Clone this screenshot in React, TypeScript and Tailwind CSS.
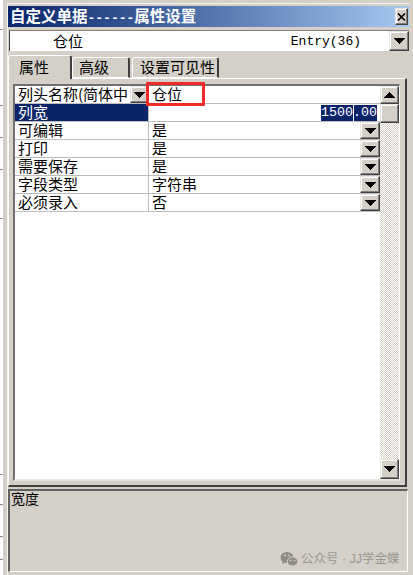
const FONT = "font-['Noto_Sans_CJK_SC','Liberation_Sans',sans-serif]"
const MONO = "font-['Liberation_Mono',monospace]"
const BTN = "bg-[#d4d0c8] border-t border-l border-t-[#e8e6e1] border-l-[#e8e6e1] border-r border-b border-r-[#404040] border-b-[#404040] shadow-[inset_-1px_-1px_0_#808080,inset_1px_1px_0_#ffffff] flex items-center justify-center"

const ROWS = [
  { name: "可编辑", value: "是" },
  { name: "打印", value: "是" },
  { name: "需要保存", value: "是" },
  { name: "字段类型", value: "字符串" },
  { name: "必须录入", value: "否" },
]

// bits of the desktop behind the window
const SLIVER = [30, 76, 32, 32, 49, 256, 30, 32, 23]

function Arrow({ up = false }: { up?: boolean }) {
  return (
    <svg width="11" height="6" viewBox="0 0 11 6" className={up ? "rotate-180" : ""}>
      <path d="M0 0h11v1h-1v1h-1v1h-1v1h-1v1h-1v1h-1v-1h-1v-1h-1v-1h-1v-1h-1v-1h-1z" fill="#000" />
    </svg>
  )
}

function DropButton({ className }: { className: string }) {
  return <div className={`${BTN} ${className}`}><Arrow /></div>
}

function Tab({ label, active, className }: { label: string; active?: boolean; className: string }) {
  return (
    <div className={`${className} flex items-center rounded-t-[3px] border-t border-l border-t-white border-l-white border-r-2 border-r-[#404040] text-[15px] text-black ${active ? "h-[24px] relative z-10 -mb-px bg-[#d4d0c8]" : "h-[21px] self-end border-b border-b-white"}`}>
      <span className="pb-[2px]">{label}</span>
    </div>
  )
}

export default function App() {
  return (
    <div className={`${FONT} relative w-[413px] h-[575px] flex bg-[#d4d0c8] overflow-hidden leading-none`}>
      <div className="w-[3px] shrink-0 flex flex-col bg-white">
        {SLIVER.map((h, i) => (
          <div key={i} className="border-b border-b-[#8a8a8a] shrink-0" style={{ height: h }} />
        ))}
      </div>

      <div className="ml-[4px] mt-[3px] w-[402px] h-[572px] shrink-0 flex flex-col border-t border-l border-t-[#f4f3f0] border-l-[#f4f3f0] pt-[2px]">
        {/* title bar */}
        <div className="h-[21px] w-[401px] flex items-center justify-between bg-gradient-to-r from-[#0a246a] to-[#a6caf0] pl-[2px] pr-px">
          <span className="text-[15.5px] font-bold text-white whitespace-nowrap">
            自定义单据<span className={`${MONO} text-[13px]`}>------</span>属性设置
          </span>
          <div className={`${BTN} w-[13px] h-[17px]`}>
            <svg width="9" height="8" viewBox="0 0 9 8">
              <path d="M1 0.5l7 7M8 0.5l-7 7" stroke="#000" strokeWidth="1.6" fill="none" />
            </svg>
          </div>
        </div>

        {/* field selector */}
        <div className="mt-[3px] ml-px h-[21px] w-[400px] flex border-t border-l border-t-[#808080] border-l-[#404040] bg-white">
          <div className="flex-1 flex items-center justify-between pl-[43px] pr-[28px] text-[15px] text-black">
            <span className="pb-[2px]">仓位</span>
            <span className={`${MONO} text-[13px]`}>Entry(36)</span>
          </div>
          <DropButton className="w-[20px] h-[20px]" />
        </div>

        {/* tabs */}
        <div className="mt-[4px] h-[23px] flex items-end">
          <Tab label="属性" active className="w-[64px] pl-[10px]" />
          <Tab label="高级" className="w-[58px] pl-[6px]" />
          <Tab label="设置可见性" className="ml-[2px] w-[87px] pl-[7px]" />
        </div>

        {/* tab panel */}
        <div className="w-[399px] h-[409px] flex flex-col border-t border-l border-t-white border-l-white border-r-2 border-b-2 border-r-[#404040] border-b-[#404040] pl-[4px] pt-[5px]">
          <div className="relative w-[387px] h-[397px] flex border-t-2 border-l-2 border-t-[#707070] border-l-[#707070] border-r border-b-2 border-r-white border-b-[#e8e6e1] bg-white">
            <div className="flex-1 flex flex-col text-[15px] text-black">
              <div className="h-[18px] flex border-b border-b-[#bdbdbd]">
                <div className="w-[133px] flex items-center justify-between">
                  <span className="pl-[3px] pb-[2px] whitespace-nowrap">列头名称(简体中</span>
                  <DropButton className="w-[18px] h-[17px] shrink-0" />
                </div>
                <div className="flex-1 flex items-center pl-[4px]"><span className="pb-[2px]">仓位</span></div>
              </div>
              <div className="h-[18px] flex border-b border-b-[#bdbdbd]">
                <div className="w-[133px] flex items-center bg-[#0a246a] pl-[3px] text-white"><span className="pb-[2px]">列宽</span></div>
                <div className="flex-1 flex items-center justify-end border-l border-l-[#bdbdbd] pr-[3px]">
                  <span className={`${MONO} relative bg-[#0a246a] h-[16px] w-[56px] flex items-center justify-center text-[13.3px] text-white`}>
                    1500.00
                    <span className="absolute left-[32px] top-0 h-[17px] w-px bg-white" />
                  </span>
                </div>
              </div>
              {ROWS.map((r) => (
                <div key={r.name} className="h-[18px] flex border-b border-b-[#bdbdbd]">
                  <div className="w-[133px] flex items-center pl-[3px]"><span className="pb-[2px]">{r.name}</span></div>
                  <div className="flex-1 flex items-center justify-between border-l border-l-[#bdbdbd] pl-[3px]">
                    <span className="pb-[2px]">{r.value}</span>
                    <DropButton className="w-[20px] h-[17px]" />
                  </div>
                </div>
              ))}
            </div>

            {/* scrollbar */}
            <div className="w-[19px] flex flex-col bg-[repeating-conic-gradient(#d4d0c8_0_25%,#ffffff_0_50%)] bg-size-[2px_2px]">
              <div className={`${BTN} w-[19px] h-[18px]`}><Arrow up /></div>
              <div className={`${BTN} w-[19px] h-[19px]`} />
              <div className="flex-1" />
              <div className={`${BTN} w-[19px] h-[20px]`}><Arrow /></div>
            </div>

            <div className="absolute left-[131px] top-[-4px] w-[59px] h-[24px] border-[3px] border-[#ee2a2a] rounded-[1px]" />
          </div>
        </div>

        {/* description */}
        <div className="mt-[2px] w-[400px] h-[83px] border-t-2 border-l-2 border-t-[#606060] border-l-[#606060] border-r border-b border-r-white border-b-white pl-px text-[14px] text-black">
          宽度
        </div>
      </div>

      {/* watermark */}
      <div className="absolute left-[280px] top-[551px] flex items-center gap-[3px] font-['Liberation_Sans','Noto_Sans_CJK_SC',sans-serif] text-[12.5px] text-[#9a9792] whitespace-nowrap">
        <svg width="18" height="16" viewBox="0 0 18 16">
          <ellipse cx="7" cy="6.5" rx="6.5" ry="5.5" fill="#8f8c87" />
          <path d="M3 10l-1 3 3.5-1.5z" fill="#8f8c87" />
          <ellipse cx="12.5" cy="10.5" rx="5.2" ry="4.5" fill="#8f8c87" stroke="#d4d0c8" />
          <circle cx="10.5" cy="9.5" r="0.8" fill="#d4d0c8" />
          <circle cx="14.5" cy="9.5" r="0.8" fill="#d4d0c8" />
          <circle cx="5" cy="4.5" r="0.9" fill="#d4d0c8" />
          <circle cx="9" cy="4.5" r="0.9" fill="#d4d0c8" />
        </svg>
        <span>公众号 · JJ学金蝶</span>
      </div>
    </div>
  )
}
